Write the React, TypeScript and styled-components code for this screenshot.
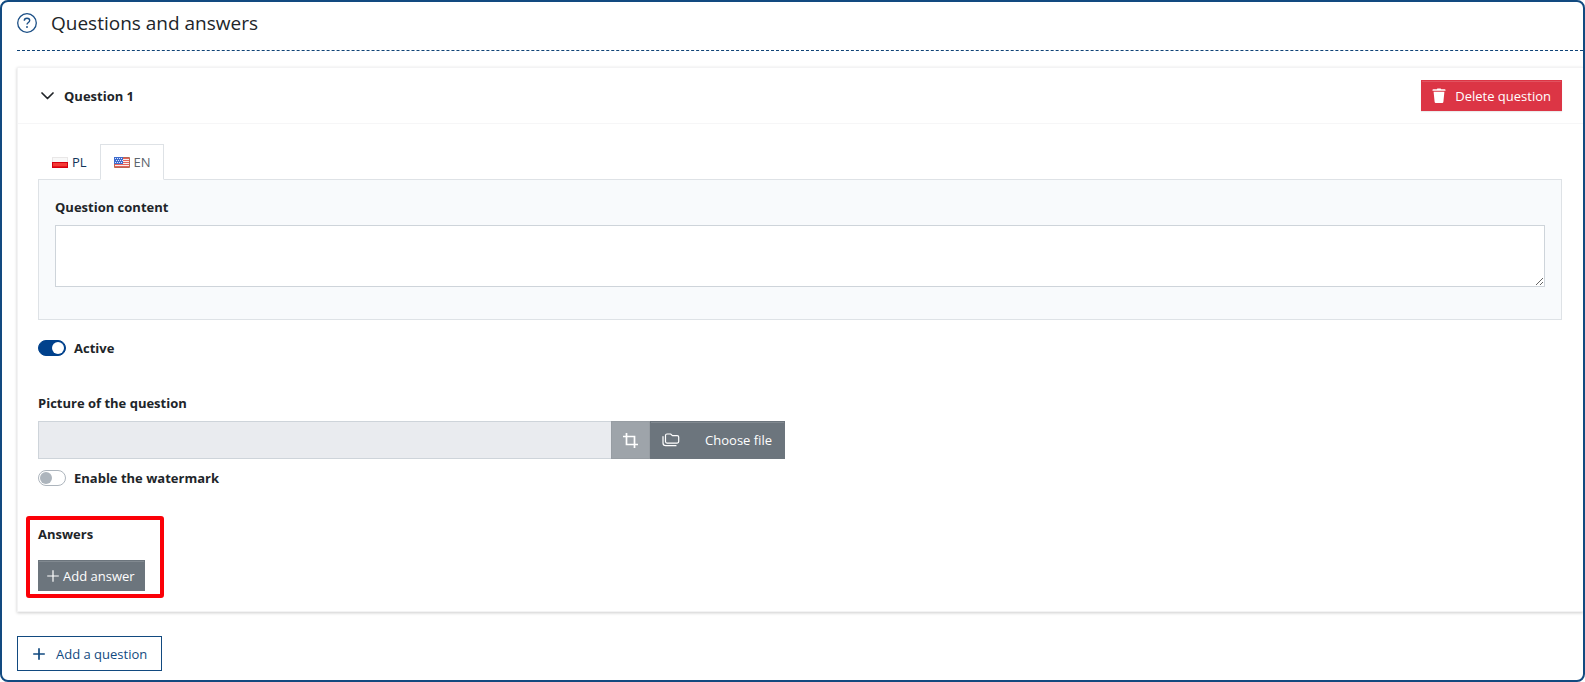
import React, { useState } from 'react';
import styled, { createGlobalStyle } from 'styled-components';

const GlobalStyle = createGlobalStyle`
  *, *::before, *::after { box-sizing: border-box; }
  body {
    margin: 0;
    background: #fff;
    color: #212529;
    font-family: "Segoe UI", "Open Sans", "Noto Sans", sans-serif;
    font-size: 13px;
    line-height: 20px;
  }
  button, input, textarea { font: inherit; }
  svg { display: block; flex: none; }
`;

const Frame = styled.main`
  display: flex;
  flex-direction: column;
  align-items: stretch;
  min-height: 100vh;
  padding: 0 0 9px 15px;
  border: 2px solid #124a80;
  border-radius: 8px;
`;

const SectionHeader = styled.header`
  display: flex;
  align-items: center;
  gap: 14px;
  height: 49px;
  padding-bottom: 7px;
  border-bottom: 1px dashed #0f4377;
`;

const Title = styled.h1`
  margin: 0;
  font-size: 19px;
  line-height: 24px;
  font-weight: 500;
`;

const Card = styled.section`
  margin: 16px 0 24px;
  border: 1px solid #f3f3f4;
  border-right: 0;
  box-shadow: 0 1px 3px rgba(0, 0, 0, 0.2);
  clip-path: inset(-4px 0 -4px -4px);
`;

const CardHeader = styled.div`
  display: flex;
  align-items: center;
  justify-content: space-between;
  height: 56px;
  padding: 0 21px 0 20px;
  border-bottom: 1px solid #f6f6f7;
`;

const Collapse = styled.button`
  display: flex;
  align-items: center;
  gap: 10px;
  padding: 0 3px;
  border: 0;
  background: none;
  color: inherit;
  font-weight: 700;
`;

const DeleteButton = styled.button`
  display: flex;
  align-items: center;
  gap: 9px;
  height: 31px;
  padding: 0 10px;
  border: 1px solid #dc3545;
  background: #dc3545;
  color: #fff;
  box-shadow: inset 0 1px 0 rgba(255, 255, 255, 0.15), 0 1px 1px rgba(0, 0, 0, 0.08);
`;

const CardBody = styled.div`
  padding: 20px 21px 20px 20px;
`;

const TabList = styled.div`
  display: flex;
  margin-bottom: -1px;
`;

const Tab = styled.button<{ $active: boolean }>`
  position: relative;
  display: flex;
  align-items: center;
  gap: 4px;
  height: 36px;
  padding: 0 12px 0 13px;
  border: 1px solid ${p => (p.$active ? '#dee2e6' : 'transparent')};
  border-bottom-color: ${p => (p.$active ? '#fff' : 'transparent')};
  background: ${p => (p.$active ? '#fff' : 'transparent')};
  color: ${p => (p.$active ? '#5c656d' : '#12355b')};
`;

const TabPanel = styled.div`
  padding: 17px 16px 32px;
  border: 1px solid #dee2e6;
  background: #f8fafc;
`;

const Label = styled.label`
  display: block;
  margin-bottom: 8px;
  font-weight: 700;
`;

const ContentArea = styled.textarea`
  display: block;
  width: 100%;
  height: 62px;
  padding: 6px 12px;
  border: 1px solid #ced4da;
  background: #fff;
  resize: vertical;
`;

const SwitchRow = styled.label`
  display: flex;
  align-items: center;
  gap: 8px;
  height: 20px;
  font-weight: 700;
`;

const SwitchInput = styled.input`
  appearance: none;
  display: flex;
  align-items: center;
  width: 28px;
  height: 16px;
  margin: 0;
  padding: 1px;
  border: 1px solid #adb5bd;
  border-radius: 8px;
  background: #fff;

  &::before {
    content: "";
    width: 12px;
    height: 12px;
    border-radius: 50%;
    background: #adb5bd;
  }
  &:checked {
    justify-content: flex-end;
    border-color: #00418c;
    background: #00418c;
  }
  &:checked::before { background: #fff; }
`;

const ActiveField = styled.div`
  padding: 18px 0 35px;
`;

const PictureField = styled.div`
  width: calc(50% - 15px);
  padding-bottom: 9px;
`;

const FileGroup = styled.div`
  display: flex;
  height: 38px;
`;

const FilePath = styled.input`
  flex: 1;
  min-width: 0;
  padding: 6px 12px;
  border: 1px solid #ced4da;
  border-right: 0;
  background: #e9ebef;
`;

const CropButton = styled.button`
  display: flex;
  align-items: center;
  justify-content: center;
  width: 39px;
  padding: 0;
  border: 1px solid #979da3;
  background: #9ea4aa;
  color: #fff;
`;

const ChooseButton = styled.button`
  display: flex;
  align-items: center;
  justify-content: space-between;
  width: 135px;
  padding: 0 12px 0 11px;
  border: 1px solid #6c757d;
  background: #6c757d;
  color: #fff;
  box-shadow: inset 0 1px 0 rgba(255, 255, 255, 0.15);
`;

const Answers = styled.section`
  position: relative;
  margin-top: 36px;
`;

const AnswersTitle = styled.h2`
  margin: 0 0 16px;
  font-size: 13px;
  line-height: 20px;
  font-weight: 700;
`;

const Highlight = styled.div`
  position: absolute;
  top: -8px;
  left: -12px;
  width: 138px;
  height: 82px;
  border: 4px solid #fb0007;
  border-radius: 3px;
  pointer-events: none;
`;

const AddAnswer = styled.button`
  display: flex;
  align-items: center;
  gap: 4px;
  height: 31px;
  padding: 0 9px 0 8px;
  border: 1px solid #6c757d;
  background: #6c757d;
  color: #fff;
  box-shadow: inset 0 1px 0 rgba(255, 255, 255, 0.15);
`;

const AddQuestion = styled.button`
  display: flex;
  align-items: center;
  align-self: flex-start;
  gap: 11px;
  height: 35px;
  padding: 0 14px 0 15px;
  border: 1px solid #124a80;
  background: #fff;
  color: #124a80;
`;

const HelpIcon = () => (
  <svg width="20" height="20" viewBox="0 0 20 20" fill="none" stroke="#1b4f86" strokeWidth="1.3">
    <circle cx="10" cy="10" r="9.3" />
    <path d="M7.3 7.8c0-1.7 1.1-2.5 2.7-2.5s2.7.9 2.7 2.3c0 1.9-2.7 2-2.7 4" strokeWidth="1.4" />
    <circle cx="10" cy="14" r=".95" fill="#1b4f86" stroke="none" />
  </svg>
);

const ChevronIcon = () => (
  <svg width="13" height="8" viewBox="0 0 13 8" fill="none" stroke="#212529" strokeWidth="1.7" strokeLinecap="round" strokeLinejoin="round">
    <path d="M1 1l5.5 5.5L12 1" />
  </svg>
);

const TrashIcon = () => (
  <svg width="14" height="16" viewBox="0 0 14 16" fill="#fff">
    <path d="M1.2 1.2h3.6L5.4.4h3.2l.6.8h3.6q.7 0 .7.7v.9H.5v-.9q0-.7.7-.7z" />
    <path d="M1.6 3.8h10.8l-1 10q-.1 1.2-1.2 1.2H3.8q-1.1 0-1.2-1.2z" />
  </svg>
);

const PolishFlag = () => (
  <svg width="16" height="11" viewBox="0 0 16 11">
    <path d="M0 0h16v5H0z" fill="#e9e7e7" />
    <path d="M1 1h14v4H1z" fill="#f8f8f8" />
    <path d="M0 5h16v6H0z" fill="#d40010" />
    <path d="M1 6h14v3H1z" fill="#f33a35" />
    <path d="M1 9h14v1H1z" fill="#e8141a" />
  </svg>
);

const AmericanFlag = () => (
  <svg width="16" height="11" viewBox="0 0 16 11">
    <path d="M0 0h16v11H0z" fill="#f7efeb" />
    <path d="M8 1.5h8M8 3.5h8M8 5.5h8M0 7.5h16M0 9.5h16" stroke="#e6625b" />
    <path d="M.5.5h15v10H.5z" fill="none" stroke="#b96850" />
    <path d="M0 0h9v7H0z" fill="#3f6ccd" />
    <path d="M1 1.5h8M2 3.5h7M1 5.5h8" stroke="#dbe6ff" strokeDasharray="1 1" />
  </svg>
);

const CropIcon = () => (
  <svg width="15" height="15" viewBox="0 0 15 15" fill="none" stroke="#fff" strokeWidth="1.7">
    <path d="M3.5 0v11.5H15M0 3.5h11.5V15" />
  </svg>
);

const FoldersIcon = () => (
  <svg width="18" height="14" viewBox="0 0 18 14" fill="none" stroke="#fff" strokeWidth="1.2" strokeLinejoin="round" strokeLinecap="round">
    <path d="M5 1h3.6l1.8 1.6h4.8q1.5 0 1.5 1.5v4.5q0 1.5-1.5 1.5H5q-1.5 0-1.5-1.5V2.5Q3.5 1 5 1z" />
    <path d="M1 3.6V10q0 2.7 2.7 2.7H14" />
  </svg>
);

const PlusIcon = ({ weight = 1.2 }: { weight?: number }) => (
  <svg width="12" height="12" viewBox="0 0 12 12" fill="none" stroke="currentColor" strokeWidth={weight}>
    <path d="M6 .2v11.6M.2 6h11.6" />
  </svg>
);

type Lang = 'PL' | 'EN';

export default function App() {
  const [lang, setLang] = useState<Lang>('EN');
  const [open, setOpen] = useState(true);
  const [content, setContent] = useState<Record<Lang, string>>({ PL: '', EN: '' });

  return (
    <>
      <GlobalStyle />
      <Frame>
        <SectionHeader>
          <HelpIcon />
          <Title>Questions and answers</Title>
        </SectionHeader>

        <Card>
          <CardHeader>
            <Collapse type="button" aria-expanded={open} onClick={() => setOpen(!open)}>
              <ChevronIcon />
              Question 1
            </Collapse>
            <DeleteButton type="button">
              <TrashIcon />
              Delete question
            </DeleteButton>
          </CardHeader>

          {open && (
            <CardBody>
              <TabList role="tablist">
                <Tab type="button" role="tab" aria-selected={lang === 'PL'} $active={lang === 'PL'} onClick={() => setLang('PL')}>
                  <PolishFlag />
                  PL
                </Tab>
                <Tab type="button" role="tab" aria-selected={lang === 'EN'} $active={lang === 'EN'} onClick={() => setLang('EN')}>
                  <AmericanFlag />
                  EN
                </Tab>
              </TabList>
              <TabPanel role="tabpanel">
                <Label htmlFor="question-content">Question content</Label>
                <ContentArea
                  id="question-content"
                  value={content[lang]}
                  onChange={e => setContent({ ...content, [lang]: e.target.value })}
                />
              </TabPanel>

              <ActiveField>
                <SwitchRow>
                  <SwitchInput type="checkbox" role="switch" defaultChecked />
                  Active
                </SwitchRow>
              </ActiveField>

              <PictureField>
                <Label htmlFor="question-picture">Picture of the question</Label>
                <FileGroup>
                  <FilePath id="question-picture" type="text" readOnly />
                  <CropButton type="button" aria-label="Crop" disabled>
                    <CropIcon />
                  </CropButton>
                  <ChooseButton type="button">
                    <FoldersIcon />
                    Choose file
                  </ChooseButton>
                </FileGroup>
              </PictureField>
              <SwitchRow>
                <SwitchInput type="checkbox" role="switch" />
                Enable the watermark
              </SwitchRow>

              <Answers>
                <AnswersTitle>Answers</AnswersTitle>
                <AddAnswer type="button">
                  <PlusIcon />
                  Add answer
                </AddAnswer>
                <Highlight />
              </Answers>
            </CardBody>
          )}
        </Card>

        <AddQuestion type="button">
          <PlusIcon weight={1.7} />
          Add a question
        </AddQuestion>
      </Frame>
    </>
  );
}
